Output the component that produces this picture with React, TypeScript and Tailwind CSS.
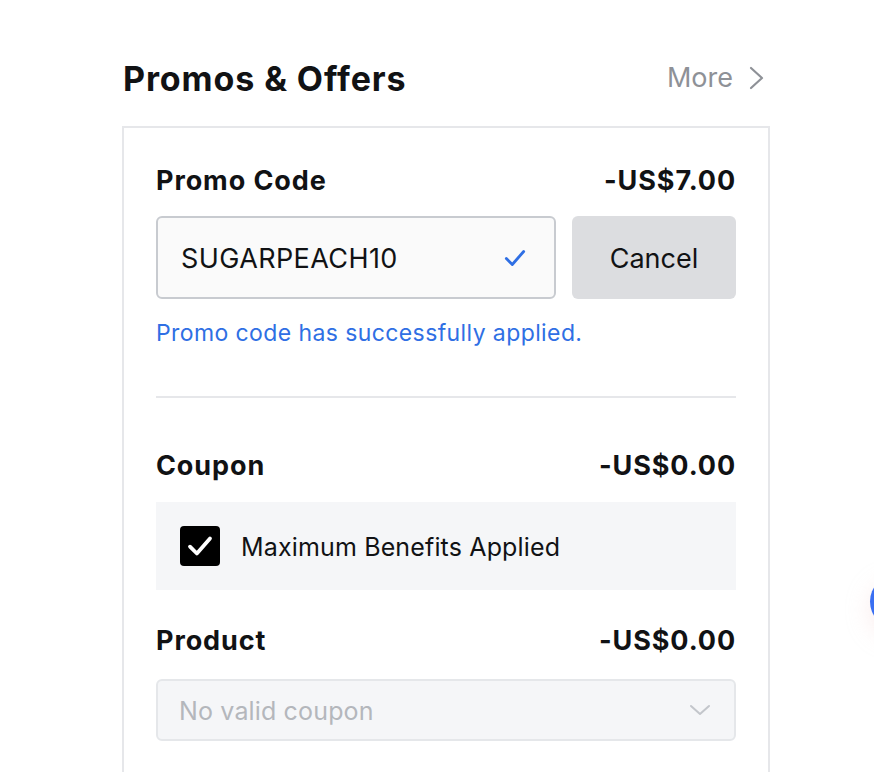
import React from "react";

function CheckIcon({ className, width = 2.6 }: { className?: string; width?: number }) {
  return (
    <svg viewBox="0 0 24 24" fill="none" stroke="currentColor" strokeWidth={width} strokeLinecap="round" strokeLinejoin="round" className={className}>
      <polyline points="4 12.5 9.5 18 20 6" />
    </svg>
  );
}

function SectionTitle({ label, amount }: { label: string; amount: string }) {
  return (
    <div className="flex items-center justify-between h-8">
      <span className="text-[27px] font-bold tracking-[0.9px] text-[#111214]">{label}</span>
      <span className="text-[27px] font-bold tracking-[0.9px] text-[#111214]">{amount}</span>
    </div>
  );
}

export default function App() {
  return (
    <div className="relative min-h-[772px] bg-white overflow-hidden font-['Inter',sans-serif] text-[#111214]">
      <div className="ml-[122px] w-[648px] pt-[58px]">
        {/* header */}
        <div className="flex items-center justify-between h-10 pl-px pr-[5px]">
          <h2 className="text-[34px] font-bold tracking-[0.9px]">Promos &amp; Offers</h2>
          <button className="flex items-center gap-[14px] text-[27px] text-[#8e9197]">
            <span>More</span>
            <svg width="18" height="26" viewBox="0 0 18 26" fill="none" stroke="currentColor" strokeWidth="2.2" strokeLinecap="round" strokeLinejoin="round">
              <polyline points="4 3 15 13 4 23" />
            </svg>
          </button>
        </div>

        {/* card */}
        <div className="mt-[28px] border-2 border-b-0 border-[#e6e7ea] px-8 pt-[37px] pb-10">
          <SectionTitle label="Promo Code" amount="-US$7.00" />

          <div className="mt-[19px] flex gap-4">
            <div className="flex-1 h-[83px] flex items-center justify-between rounded-md border-2 border-[#c8cbd0] bg-[#fafafa] pl-[23px] pr-[26px]">
              <span className="pt-[3px] text-[27px] tracking-[0.4px]">SUGARPEACH10</span>
              <CheckIcon className="w-[26px] h-[26px] text-[#2f6fe4]" />
            </div>
            <button className="w-[164px] h-[83px] pt-[3px] rounded-md bg-[#dcdde0] text-[27px]">Cancel</button>
          </div>

          <p className="mt-[20px] text-[23px] leading-7 tracking-[0.4px] text-[#2f6fe4]">Promo code has successfully applied.</p>

          <div className="mt-[49px] h-[2px] bg-[#e6e7ea]" />

          <div className="mt-[52px]">
            <SectionTitle label="Coupon" amount="-US$0.00" />
          </div>

          <div className="mt-[20px] h-[88px] flex items-center gap-[21px] bg-[#f5f6f8] pl-6">
            <div className="w-10 h-10 rounded-[4px] bg-black flex items-center justify-center">
              <CheckIcon className="w-[30px] h-[30px] text-white" width={3} />
            </div>
            <span className="pt-[3px] text-[25px] tracking-[0.15px]">Maximum Benefits Applied</span>
          </div>

          <div className="mt-[35px]">
            <SectionTitle label="Product" amount="-US$0.00" />
          </div>

          <div className="mt-[22px] h-[62px] flex items-center justify-between rounded-md border-2 border-[#e5e7ea] bg-[#f5f6f8] pl-[21px] pr-[22px]">
            <span className="pt-[3px] text-[25px] tracking-[0.15px] text-[#b4b7bc]">No valid coupon</span>
            <svg width="24" height="24" viewBox="0 0 24 24" fill="none" stroke="#c3c6cb" strokeWidth="2" strokeLinecap="round" strokeLinejoin="round">
              <polyline points="3 8 12 16 21 8" />
            </svg>
          </div>
        </div>
      </div>

      {/* floating widget peeking in from the right edge */}
      <div className="absolute left-[870px] top-[575px] w-[53px] h-[53px] rounded-full bg-[#3a6ff2] shadow-[0_8px_24px_rgba(240,200,200,0.35)]" />
    </div>
  );
}
